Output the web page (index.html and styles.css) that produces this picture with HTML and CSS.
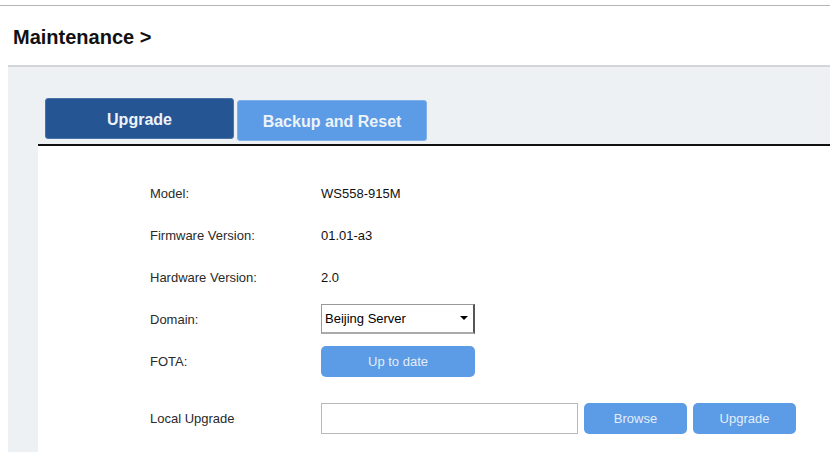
FILE: index.html
```html
<!DOCTYPE html>
<html lang="en">
<head>
    <meta charset="UTF-8">
    <title>Maintenance</title>
    <link rel="stylesheet" href="styles.css">
</head>
<body>
    <div class="topbar"></div>
    <h1 class="page-title">Maintenance &gt;</h1>

    <div class="panel">
        <div class="tabs">
            <div class="tab active">Upgrade</div>
            <div class="tab">Backup and Reset</div>
        </div>

        <div class="content">
            <div class="form">
                <div class="label">Model:</div>
                <div class="value">WS558-915M</div>

                <div class="label">Firmware Version:</div>
                <div class="value">01.01-a3</div>

                <div class="label">Hardware Version:</div>
                <div class="value">2.0</div>

                <div class="label">Domain:</div>
                <div class="value">
                    <span class="select-wrap">
                        <select class="select">
                            <option>Beijing Server</option>
                        </select>
                    </span>
                </div>

                <div class="label">FOTA:</div>
                <div class="value">
                    <button class="btn btn-wide">Up to date</button>
                </div>

                <div class="label">Local Upgrade</div>
                <div class="value">
                    <input type="text" class="file-input">
                    <button class="btn">Browse</button>
                    <button class="btn">Upgrade</button>
                </div>
            </div>
        </div>
    </div>
</body>
</html>
```

FILE: styles.css
```css
* {
    box-sizing: border-box;
}

body {
    margin: 0;
    font-family: "Liberation Sans", Arial, sans-serif;
    color: #222;
    background: #fff;
}

.topbar {
    width: 830px;
    height: 6px;
    border-bottom: 1px solid #b5b5b5;
}

.page-title {
    margin: 0;
    padding: 0 0 0 13px;
    height: 59px;
    line-height: 62px;
    font-size: 20px;
    font-weight: bold;
    color: #111;
}

.panel {
    margin-left: 8px;
    width: 822px;
    background: #eef1f4;
    border-top: 2px solid #d3d6d9;
    padding-top: 31px;
}

.tabs {
    display: flex;
    align-items: flex-start;
    gap: 3px;
    padding-left: 37px;
    height: 46px;
}

.tab {
    width: 190px;
    height: 41px;
    line-height: 41px;
    text-align: center;
    font-size: 16px;
    font-weight: bold;
    color: #eef3fa;
    background: #5c9be6;
    border: 1px solid #7fb0ea;
    border-radius: 3px;
    margin-top: 2px;
}

.tab.active {
    width: 189px;
    margin-top: 0;
    background: #265593;
    border-color: #4a73a8;
}

.content {
    margin-left: 30px;
    background: #fff;
    border-top: 2px solid #111;
    height: 308px;
    padding: 26px 0 0 112px;
}

.form {
    display: grid;
    grid-template-columns: 171px auto;
    grid-template-rows: repeat(5, 42px) 72px;
    align-items: center;
    font-size: 13px;
}

.label {
    color: #2a2a2a;
}

.value {
    color: #111;
    display: flex;
    align-items: center;
    gap: 6px;
}

.select-wrap {
    position: relative;
    display: inline-block;
}

.select {
    appearance: none;
    width: 154px;
    height: 30px;
    padding: 0 0 0 3px;
    font-family: "Liberation Sans", Arial, sans-serif;
    font-size: 13px;
    color: #000;
    background: #fff;
    border: 1px solid #999;
    border-right: 2px solid #555;
    border-bottom: 2px solid #aaa;
    border-radius: 0;
}

.select-wrap::after {
    content: "";
    position: absolute;
    right: 7px;
    top: 12px;
    border-left: 4px solid transparent;
    border-right: 4px solid transparent;
    border-top: 4px solid #000;
}

.btn {
    width: 103px;
    height: 31px;
    border: none;
    border-radius: 5px;
    background: #5c9be6;
    color: #e4edf9;
    font-family: "Liberation Sans", Arial, sans-serif;
    font-size: 13px;
    cursor: pointer;
}

.btn-wide {
    width: 154px;
}

.file-input {
    width: 257px;
    height: 31px;
    border: 1px solid #b8b8b8;
    background: #fff;
    outline: none;
}
```
